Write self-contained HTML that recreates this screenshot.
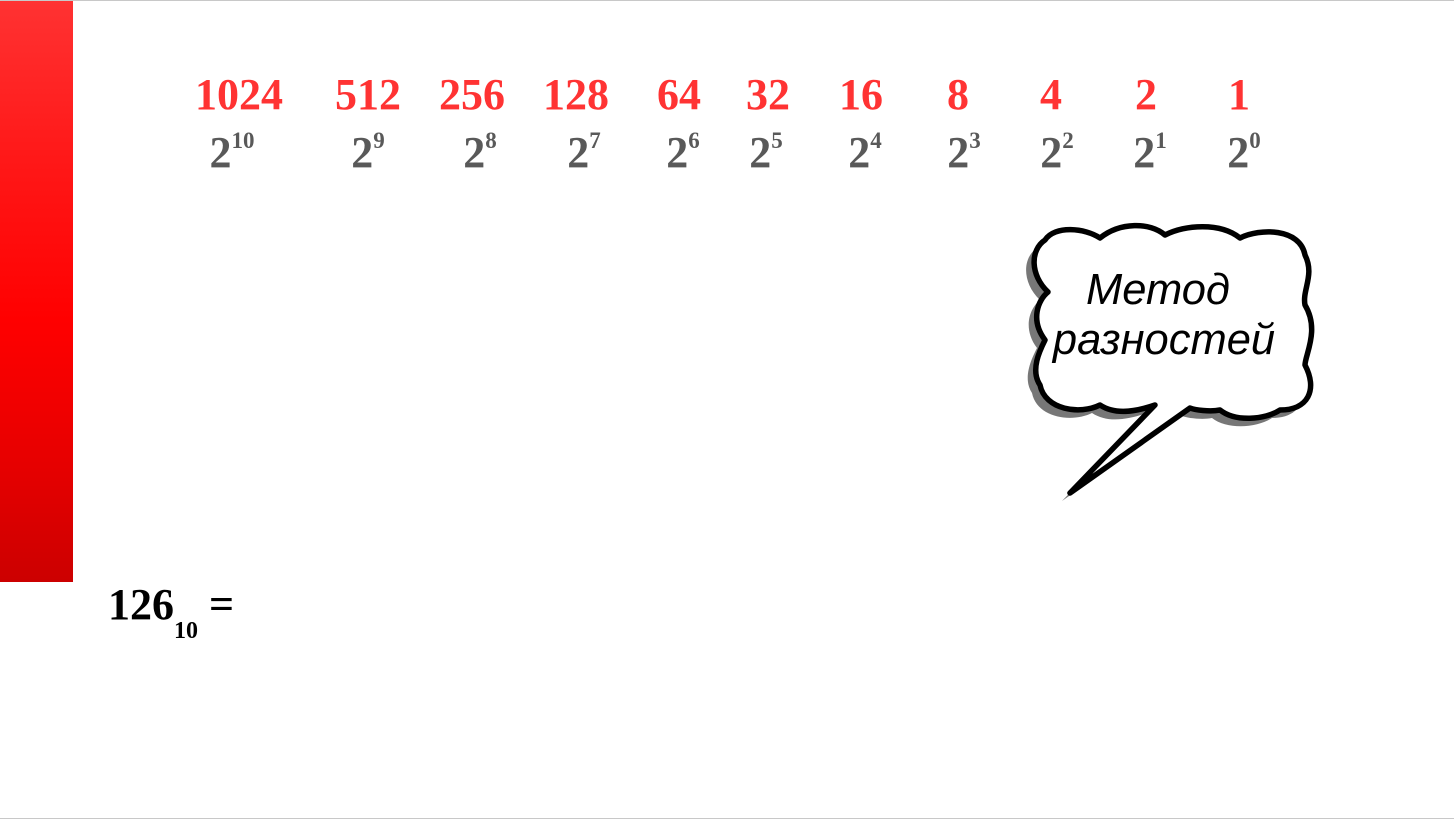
<!DOCTYPE html>
<html><head><meta charset="utf-8"><style>
body{margin:0;width:1454px;height:820px;position:relative;background:#fff;overflow:hidden;font-family:"Liberation Serif",serif}
.top{position:absolute;left:0;top:0;width:1454px;height:1px;background:#c8c8c8}
.bot{position:absolute;left:0;top:818px;width:1454px;height:1px;background:#c8c8c8}
.bar{position:absolute;left:0;top:1px;width:73px;height:581px;background:linear-gradient(#ff3232,#ff1a1a 25%,#ff0000 55%,#e60000 80%,#cc0000)}
.n{position:absolute;top:70px;font-weight:bold;font-size:44px;color:#ff3333;transform:translateX(-50%);line-height:50px;white-space:nowrap}
.p{position:absolute;top:128px;font-weight:bold;font-size:44px;color:#595959;transform:translateX(-50%);line-height:50px;white-space:nowrap}
.p sup{font-size:23px;vertical-align:19px;line-height:0}
.eq{position:absolute;left:108px;top:580px;font-weight:bold;font-size:44px;line-height:50px;white-space:nowrap}
.eq sub{font-size:24px;vertical-align:-19px;line-height:0}
.bt{position:absolute;font-family:"Liberation Sans",sans-serif;font-style:italic;font-size:43.5px;line-height:50px;transform:translateX(-50%);white-space:nowrap}
</style></head><body>
<div class="top"></div><div class="bot"></div><div class="bar"></div>
<div class="n" style="left:239px">1024</div>
<div class="n" style="left:368px">512</div>
<div class="n" style="left:472px">256</div>
<div class="n" style="left:576px">128</div>
<div class="n" style="left:679px">64</div>
<div class="n" style="left:768px">32</div>
<div class="n" style="left:861px">16</div>
<div class="n" style="left:958px">8</div>
<div class="n" style="left:1051px">4</div>
<div class="n" style="left:1146px">2</div>
<div class="n" style="left:1239px">1</div>
<div class="p" style="left:232px">2<sup>10</sup></div>
<div class="p" style="left:368px">2<sup>9</sup></div>
<div class="p" style="left:480px">2<sup>8</sup></div>
<div class="p" style="left:584px">2<sup>7</sup></div>
<div class="p" style="left:683px">2<sup>6</sup></div>
<div class="p" style="left:766px">2<sup>5</sup></div>
<div class="p" style="left:865px">2<sup>4</sup></div>
<div class="p" style="left:964px">2<sup>3</sup></div>
<div class="p" style="left:1057px">2<sup>2</sup></div>
<div class="p" style="left:1150px">2<sup>1</sup></div>
<div class="p" style="left:1244px">2<sup>0</sup></div>
<svg style="position:absolute;left:0;top:0" width="1454" height="820">
<g transform="translate(-8,8)" fill="#777">
<path d="M1045,240 C1055,225 1085,228 1100,238 C1120,222 1150,222 1165,235 C1185,225 1220,222 1240,238 C1260,228 1300,228 1305,255 C1315,275 1302,290 1305,305 C1320,330 1305,355 1305,365 C1318,390 1308,410 1280,410 C1265,420 1235,422 1220,410 C1210,412 1195,410 1190,408 L1070,493 L1155,405 C1135,412 1115,415 1100,405 C1080,415 1045,410 1040,385 C1030,370 1040,350 1045,340 C1030,320 1038,300 1048,292 C1030,275 1030,250 1045,240 Z"/>
</g>
<path d="M1045,240 C1055,225 1085,228 1100,238 C1120,222 1150,222 1165,235 C1185,225 1220,222 1240,238 C1260,228 1300,228 1305,255 C1315,275 1302,290 1305,305 C1320,330 1305,355 1305,365 C1318,390 1308,410 1280,410 C1265,420 1235,422 1220,410 C1210,412 1195,410 1190,408 L1070,493 L1155,405 C1135,412 1115,415 1100,405 C1080,415 1045,410 1040,385 C1030,370 1040,350 1045,340 C1030,320 1038,300 1048,292 C1030,275 1030,250 1045,240 Z" fill="#fff" stroke="#000" stroke-width="5.5" stroke-linejoin="round"/>
</svg>
<div class="bt" style="left:1158px;top:265px">Метод</div>
<div class="bt" style="left:1164px;top:315px">разностей</div>
<div class="eq">126<sub>10</sub> =</div>
</body></html>
